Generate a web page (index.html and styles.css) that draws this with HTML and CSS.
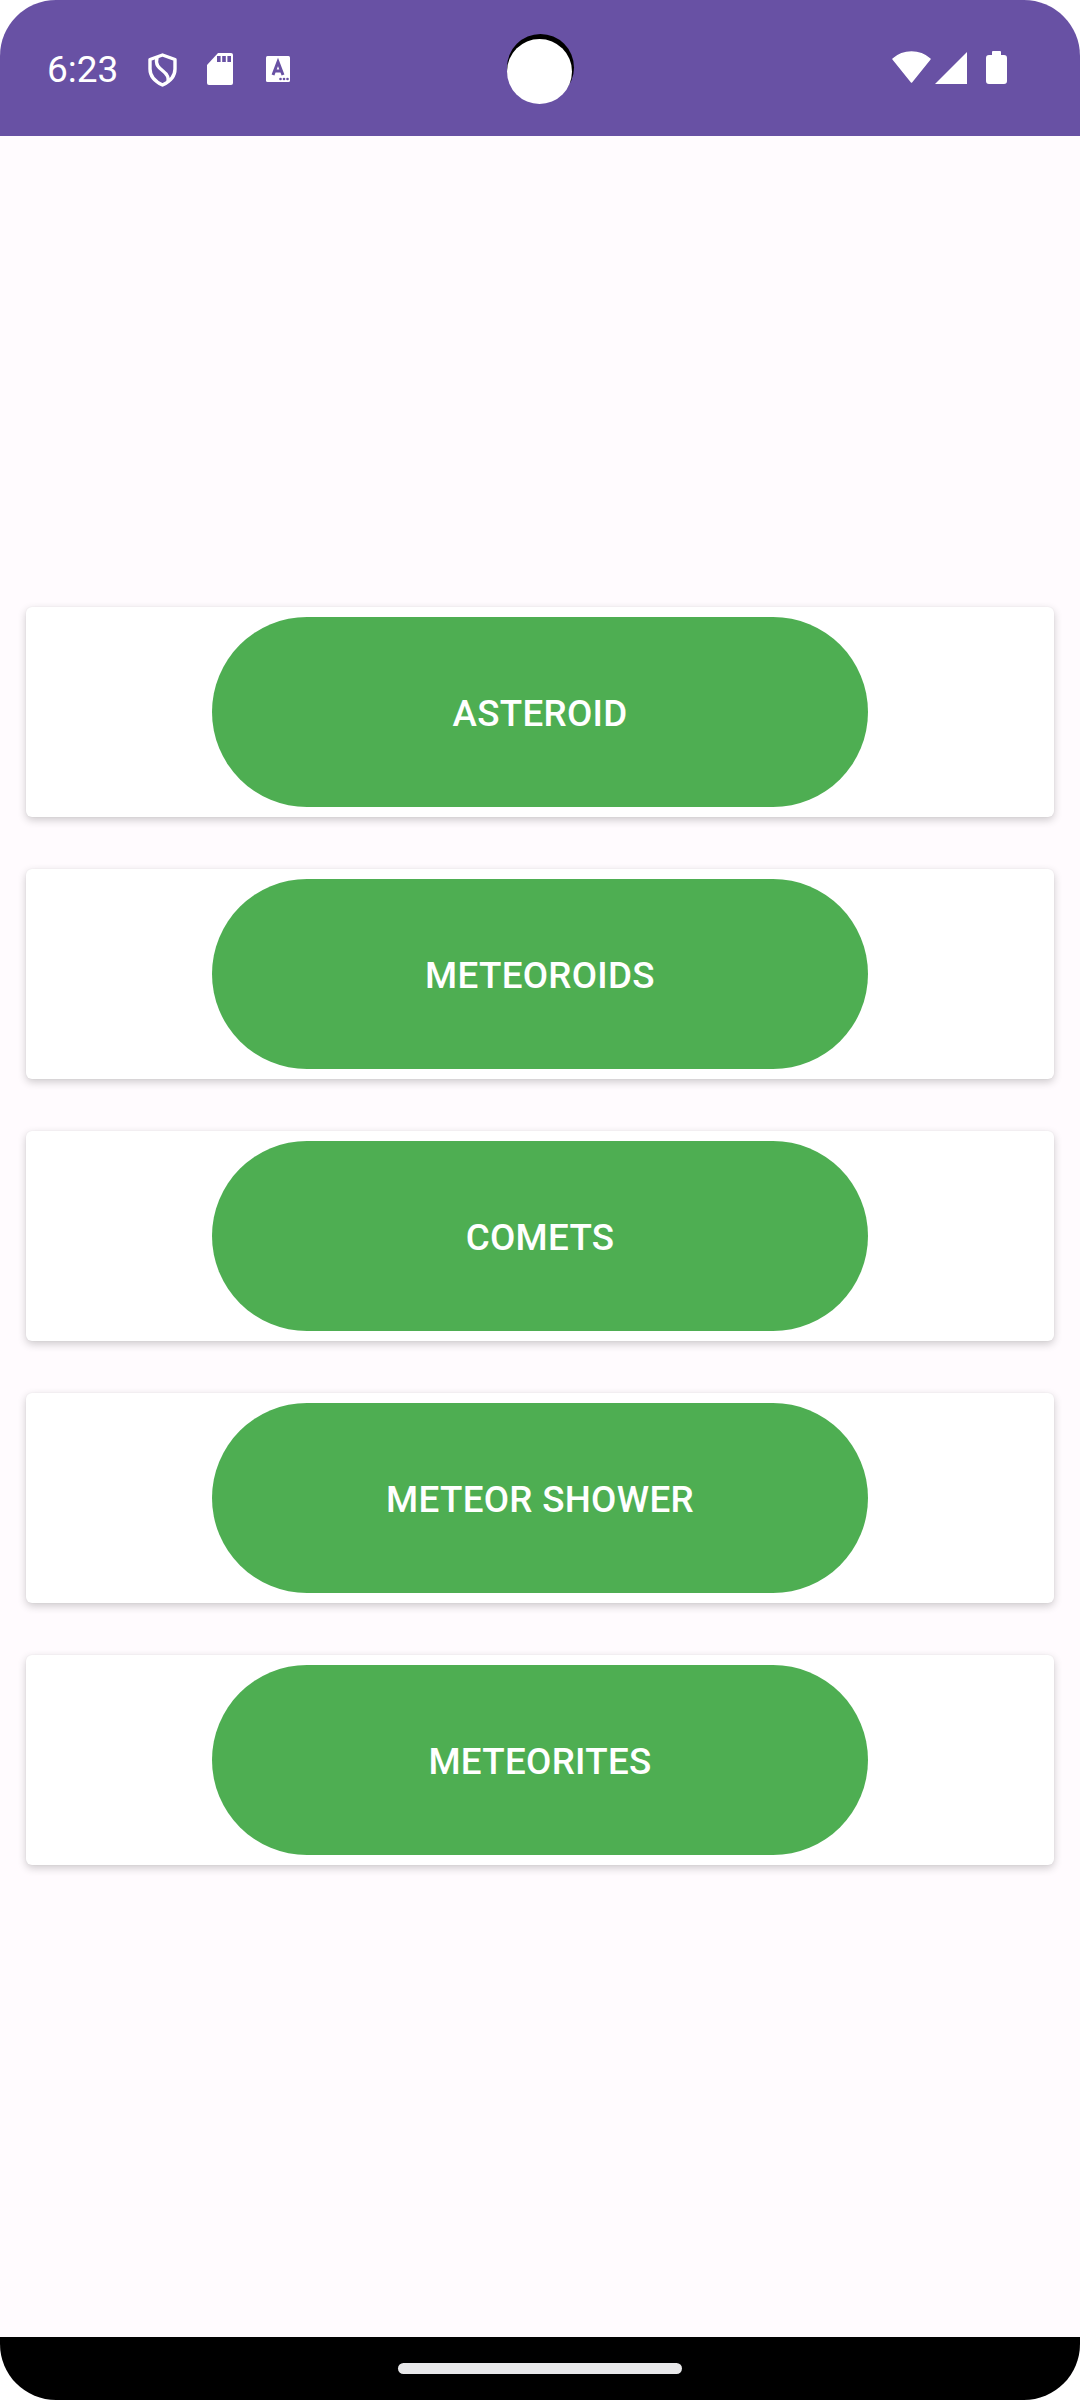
FILE: index.html
```html
<!DOCTYPE html>
<html>
<head>
    <title>Space Objects</title>
    <link rel="stylesheet" href="styles.css">
</head>
<body>
    <div class="screen">
        <div class="status-bar">
            <div class="status-left">
                <span class="time">6:23</span>
                <svg class="icon-shield" viewBox="0 0 29 34">
                    <path d="M14.500 2 L27 6.500 V16 C27 24 21 29 14.500 32 C8 29 2 24 2 16 V6.500 Z" fill="none" stroke="#fff" stroke-width="3.400" stroke-linejoin="round"/>
                    <path d="M9 4.500 C7 12 11 15 15 18 C19 21 21 24 20 29" fill="none" stroke="#fff" stroke-width="3.400"/>
                </svg>
                <svg class="icon-sd" viewBox="0 0 26 32">
                    <path d="M11 0 H24 Q26 0 26 2 V30 Q26 32 24 32 H2 Q0 32 0 30 V12 Z" fill="#fff"/>
                    <rect x="10" y="3" width="3.600" height="6" fill="#6851a4"/>
                    <rect x="15.200" y="3" width="3.600" height="6" fill="#6851a4"/>
                    <rect x="20.400" y="3" width="3.600" height="6" fill="#6851a4"/>
                </svg>
                <svg class="icon-font" viewBox="0 0 24 26">
                    <path d="M1.500 0 H22.500 Q24 0 24 1.500 V24.500 Q24 26 22.500 26 H1.500 Q0 26 0 24.500 V1.500 Q0 0 1.500 0 Z" fill="#fff"/>
                    <path d="M7 19 L12 6 L17 19 M8.800 15 H15.200" fill="none" stroke="#6851a4" stroke-width="3"/>
                    <circle cx="14.500" cy="23" r="1.300" fill="#6851a4"/>
                    <circle cx="18" cy="23" r="1.300" fill="#6851a4"/>
                    <circle cx="21.500" cy="23" r="1.300" fill="#6851a4"/>
                </svg>
            </div>
            <div class="status-right">
                <svg class="icon-wifi" viewBox="0 0 39 32">
                    <path d="M1 8 A 28 28 0 0 1 38 8 L19.500 31 Z" fill="#fff" stroke="#fff" stroke-width="1.500" stroke-linejoin="round"/>
                </svg>
                <svg class="icon-signal" viewBox="0 0 32 32">
                    <path d="M32 0 V32 H0 Z" fill="#fff"/>
                </svg>
                <svg class="icon-battery" viewBox="0 0 21 33">
                    <path d="M6 4 V1 Q6 0 7 0 H14 Q15 0 15 1 V4 H18 Q21 4 21 7 V30 Q21 33 18 33 H3 Q0 33 0 30 V7 Q0 4 3 4 Z" fill="#fff"/>
                </svg>
            </div>
            <div class="camera"><div class="camera-lens"></div></div>
        </div>

        <div class="content">
            <div class="card"><button class="pill">ASTEROID</button></div>
            <div class="card"><button class="pill">METEOROIDS</button></div>
            <div class="card"><button class="pill">COMETS</button></div>
            <div class="card"><button class="pill">METEOR SHOWER</button></div>
            <div class="card"><button class="pill">METEORITES</button></div>
        </div>

        <div class="nav-bar">
            <div class="nav-handle"></div>
        </div>
    </div>
</body>
</html>
```
FILE: styles.css
```css
* {
    margin: 0;
    padding: 0;
    box-sizing: border-box;
    font-family: Roboto, Arial, sans-serif;
}

body {
    background-color: #ffffff;
    width: 1080px;
    height: 2400px;
    overflow: hidden;
}

.screen {
    height: 2400px;
    display: flex;
    flex-direction: column;
    background-color: #fffbfe;
    border-radius: 56px;
    overflow: hidden;
}

.status-bar {
    position: relative;
    height: 136px;
    padding: 0 73px 0 47px;
    background-color: #6851a4;
    display: flex;
    align-items: flex-start;
    justify-content: space-between;
}

.status-left {
    display: flex;
    align-items: flex-start;
    margin-top: 53px;
    height: 34px;
}

.status-right {
    display: flex;
    align-items: flex-start;
    margin-top: 51px;
}

.time {
    color: #ffffff;
    font-size: 37px;
    line-height: 34px;
    width: 101px;
}

.icon-shield {
    width: 29px;
    height: 34px;
    margin-right: 30px;
}

.icon-sd {
    width: 26px;
    height: 32px;
    margin-right: 33px;
}

.icon-font {
    width: 24px;
    height: 26px;
    margin-top: 3px;
}

.icon-wifi {
    width: 39px;
    height: 32px;
    margin-right: 4px;
}

.icon-signal {
    width: 32px;
    height: 32px;
    margin-top: 1px;
    margin-right: 19px;
}

.icon-battery {
    width: 21px;
    height: 33px;
}

.camera {
    position: absolute;
    left: 507px;
    top: 34px;
    width: 67px;
    height: 67px;
    border-radius: 50%;
    background-color: #000000;
}

.camera-lens {
    position: absolute;
    left: 0;
    top: 5px;
    width: 65px;
    height: 65px;
    border-radius: 50%;
    background-color: #ffffff;
}

.content {
    flex: 1;
    display: flex;
    flex-direction: column;
    gap: 52px;
    padding: 471px 26px 0;
}

.card {
    height: 210px;
    padding: 10px 0;
    display: flex;
    justify-content: center;
    background-color: #ffffff;
    border-radius: 6px;
    box-shadow: 0 3px 8px rgba(0,0,0,0.2), 0 0 2px rgba(0,0,0,0.06);
}

.pill {
    width: 656px;
    height: 190px;
    padding-top: 2px;
    border: none;
    border-radius: 95px;
    background-color: #4eae52;
    color: #ffffff;
    font-size: 36.75px;
    font-weight: 500;
    letter-spacing: 0.3px;
}

.nav-bar {
    height: 63px;
    background-color: #000000;
    display: flex;
    justify-content: center;
    padding-top: 26px;
}

.nav-handle {
    width: 284px;
    height: 11px;
    border-radius: 6px;
    background-color: #e8e8ea;
}
```
